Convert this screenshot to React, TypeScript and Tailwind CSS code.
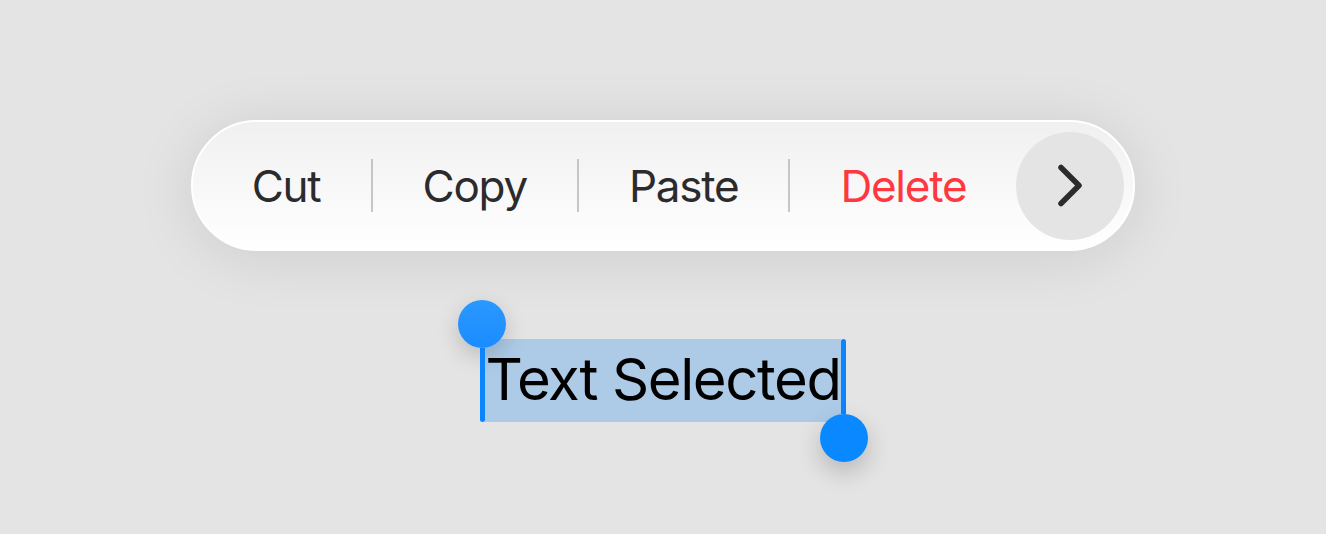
import React from 'react';

const MenuItem: React.FC<{ label: string; danger?: boolean }> = ({ label, danger = false }) => (
  <span
    className={`px-[50px] text-[44px] leading-none tracking-[-0.028em] ${danger ? 'text-[#ff383f]' : 'text-[#2b2b2d]'}`}
  >
    {label}
  </span>
);

const Separator: React.FC = () => <span className="h-[53px] w-[2px] bg-[#c6c6c6]" />;

const EditMenu: React.FC = () => (
  <div className="flex h-[131px] items-center rounded-full border-2 border-white bg-gradient-to-b from-[#f0f0f0] to-white pl-[9px] pr-[9px] shadow-[0_6px_60px_rgba(0,0,0,0.1)]">
    <MenuItem label="Cut" />
    <Separator />
    <MenuItem label="Copy" />
    <Separator />
    <MenuItem label="Paste" />
    <Separator />
    <MenuItem label="Delete" danger />
    <button
      type="button"
      className="flex h-[108px] w-[108px] items-center justify-center rounded-full bg-[#e4e4e4]"
    >
      <svg width="30" height="46" viewBox="0 0 30 46" fill="none">
        <path
          d="M5 4.5 L23 22.5 L5 40.5"
          stroke="#2b2b2d"
          strokeWidth="5.5"
          strokeLinecap="round"
          strokeLinejoin="round"
          transform="translate(1 0)"
        />
      </svg>
    </button>
  </div>
);

const Selection: React.FC = () => (
  <div className="relative">
    <span className="block bg-[#adcbe7] pb-[3px] text-[58px] leading-[80px] tracking-[-0.024em] text-black">
      Text Selected
    </span>
    {/* start handle */}
    <div className="absolute left-[-27px] top-[-39px] flex flex-col items-center">
      <span className="h-[48px] w-[48px] rounded-full bg-gradient-to-b from-[#2b98ff] to-[#1a8cff] shadow-[0_8px_22px_rgba(0,0,0,0.18)]" />
      <span className="h-[74px] w-[5px] rounded-b-full bg-[#0a84ff]" />
    </div>
    {/* end handle */}
    <div className="absolute right-[-27px] top-0 flex flex-col items-center">
      <span className="h-[75px] w-[5px] rounded-t-full bg-[#0a84ff]" />
      <span className="h-[48px] w-[48px] rounded-full bg-[#0a88ff] shadow-[0_10px_24px_rgba(0,0,0,0.2)]" />
    </div>
  </div>
);

export default function App() {
  return (
    <div
      className="flex min-h-screen flex-col items-center bg-[#e4e4e4] pt-[120px]"
      style={{ fontFamily: 'Inter, "Noto Sans", sans-serif' }}
    >
      <EditMenu />
      <div className="mt-[88px]">
        <Selection />
      </div>
    </div>
  );
}
